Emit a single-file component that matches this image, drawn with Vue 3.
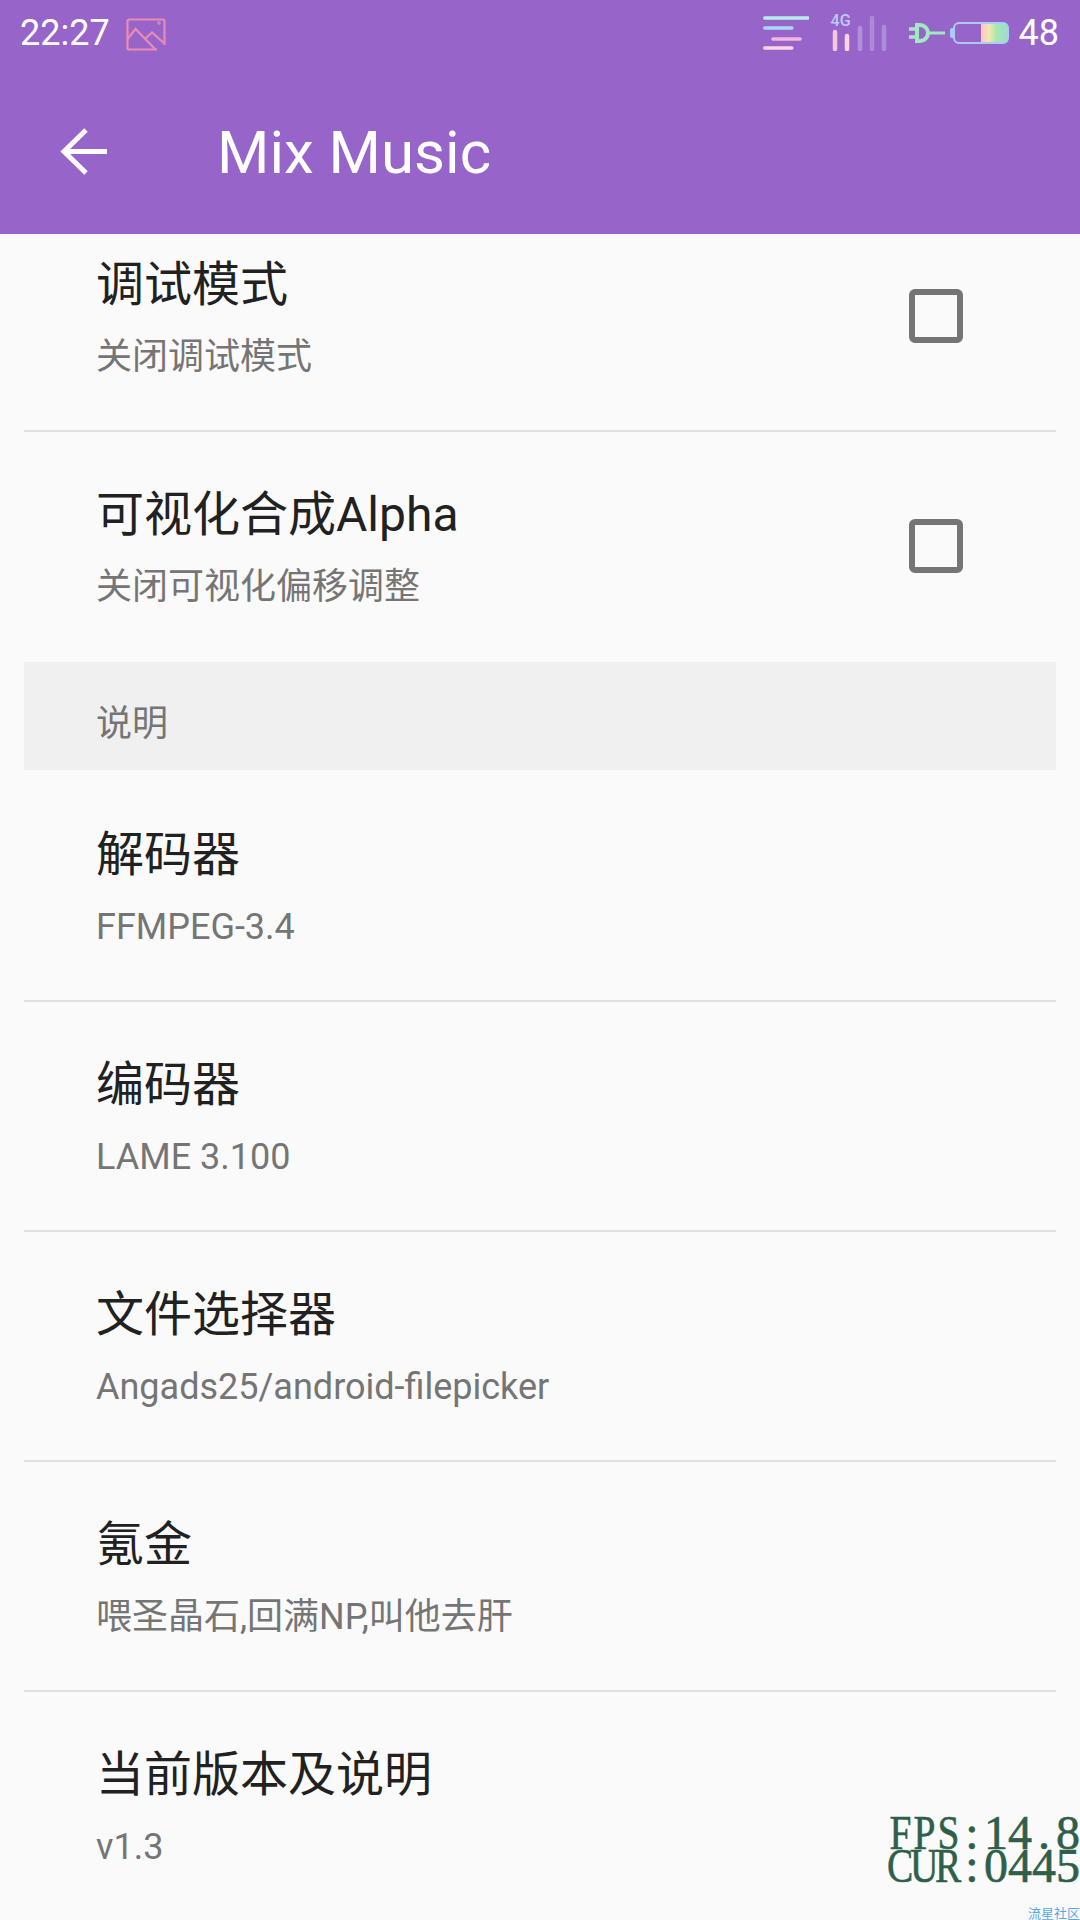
<template>
  <div class="page">
    <!-- Шапка -->
    <header class="header">
      <div class="status-bar">
        <div class="status-left">
          <span class="clock">22:27</span>
          <svg class="pic-icon" width="40" height="33" viewBox="0 0 40 33" fill="none" stroke="#e98bb4" stroke-width="2.200">
            <path d="M38.500 27V3a1.500 1.500 0 0 0-1.500-1.500H3A1.500 1.500 0 0 0 1.500 3v27A1.500 1.500 0 0 0 3 31.500h28" />
            <path d="M1.500 21L9.500 11l20 20.500" />
            <path d="M19 21l7-6.500 12.500 11" />
            <circle cx="33" cy="5" r="0.6" />
          </svg>
        </div>
        <div class="status-right">
          <svg width="46" height="34" viewBox="0 0 46 34" stroke-width="3.600" stroke-linecap="round">
            <path d="M1.800 2h43" stroke="#b9ecec" />
            <path d="M1.800 12h27" stroke="#a9d9f6" />
            <path d="M10 23h27" stroke="#f3b6dc" />
            <path d="M1.800 32h27" stroke="#fbd6e4" />
          </svg>
          <svg width="56" height="36" viewBox="0 0 56 36" stroke-width="4.500" stroke-linecap="round">
            <path d="M4 17v17" stroke="#f5c6e0" />
            <path d="M16 21v13" stroke="#f9d6e2" />
            <path d="M29 13v21" stroke="#b18fdd" />
            <path d="M41 3v31" stroke="#ab88d8" />
            <path d="M53 12v22" stroke="#ab8ed8" />
          </svg>
          <span class="net">4G</span>
          <svg class="plug" width="36" height="20" viewBox="0 0 36 20" fill="none" stroke="#a2e8c2">
            <path d="M0 6h7M0 14h7" stroke-width="3.500" />
            <path d="M8 2h3a8 8 0 0 1 0 16H8z" stroke-width="4" />
            <path d="M19 10h17" stroke-width="3" />
          </svg>
          <div class="battery">
            <div class="battery-level"></div>
          </div>
          <span class="level">48</span>
        </div>
      </div>
      <div class="toolbar">
        <svg class="back" width="48" height="48" viewBox="0 0 48 48" fill="none" stroke="#fff" stroke-width="5">
          <path d="M47 23.500H4" />
          <path d="M26 2L4 23.500 26 45" />
        </svg>
        <span class="title">Mix Music</span>
      </div>
    </header>

    <!-- Список настроек -->
    <main class="content">
      <div class="list">
        <template v-for="item in items" :key="item.title">
          <div v-if="item.section" class="section">{{ item.title }}</div>
          <div v-else class="row" :class="{ 'no-line': item.noLine }">
            <div class="row-text">
              <div class="row-title">{{ item.title }}</div>
              <div class="row-sub">{{ item.sub }}</div>
            </div>
            <span v-if="item.check" class="checkbox"></span>
          </div>
        </template>
      </div>
    </main>

    <!-- Счётчик поверх экрана -->
    <div class="fps">
      <div v-for="line in fpsLines" :key="line" class="fps-line">
        <span v-for="(ch, i) in line" :key="i" class="cell"><i :class="{ narrow: /[A-Z]/.test(ch) }">{{ ch }}</i></span>
      </div>
    </div>
    <div class="watermark">流星社区</div>
  </div>
</template>

<script setup>
const items = [
  { title: '调试模式', sub: '关闭调试模式', check: true },
  { title: '可视化合成Alpha', sub: '关闭可视化偏移调整', check: true, noLine: true },
  { title: '说明', section: true },
  { title: '解码器', sub: 'FFMPEG-3.4' },
  { title: '编码器', sub: 'LAME 3.100' },
  { title: '文件选择器', sub: 'Angads25/android-filepicker' },
  { title: '氪金', sub: '喂圣晶石,回满NP,叫他去肝' },
  { title: '当前版本及说明', sub: 'v1.3', noLine: true }
]

const fpsLines = ['FPS:14.8', 'CUR:0445']
</script>

<style scoped>
.page {
  position: relative;
  width: 1080px;
  height: 1920px;
  overflow: hidden;
  display: flex;
  flex-direction: column;
  background: #fafafa;
  font-family: Roboto, "Noto Sans CJK SC", sans-serif;
}

.header {
  position: relative;
  z-index: 1;
  height: 234px;
  flex-shrink: 0;
  background: #9765c9;
  color: #fff;
}

.status-bar {
  height: 66px;
  display: flex;
  align-items: center;
  justify-content: space-between;
  padding: 0 21px 0 20px;
}

.status-left {
  display: flex;
  align-items: center;
  gap: 16px;
}

.clock {
  font-size: 36px;
}

.pic-icon {
  margin-top: 2px;
}

.status-right {
  position: relative;
  display: flex;
  align-items: center;
  gap: 22px;
}

.net {
  position: absolute;
  left: 68px;
  top: -1px;
  font-size: 16px;
  font-weight: 500;
  color: #b9cdf6;
}

.plug {
  margin-right: -14px;
}

.battery {
  position: relative;
  width: 56px;
  height: 22px;
  display: flex;
  justify-content: flex-end;
  box-sizing: border-box;
  border: 2px solid #a9cdf6;
  border-radius: 6px;
}

.battery::before {
  content: "";
  position: absolute;
  left: -5px;
  top: 4px;
  width: 3px;
  height: 10px;
  border-radius: 2px 0 0 2px;
  background: #a9cdf6;
}

.battery-level {
  width: 26px;
  background: linear-gradient(90deg, #f8c6c8, #f7e6ae 30%, #a6e8ae 58%, #9fdcd0);
}

.level {
  font-size: 36px;
  margin-left: -12px;
}

.toolbar {
  height: 168px;
  box-sizing: border-box;
  padding-top: 3px;
  display: flex;
  align-items: center;
}

.back {
  margin-left: 60px;
}

.title {
  margin-left: 109px;
  margin-top: 2px;
  font-size: 60px;
}

.content {
  flex: 1;
  overflow: hidden;
}

.list {
  margin: -32px 24px 0;
}

.row {
  height: 230px;
  box-sizing: border-box;
  display: flex;
  align-items: center;
  justify-content: space-between;
  padding: 0 93px 0 72px;
  border-bottom: 2px solid #e0e0e0;
}

.no-line {
  border-bottom-color: transparent;
}

.row-text {
  padding-top: 2px;
}

.row-title {
  font-size: 48px;
  line-height: 64px;
  color: #212121;
}

.row-sub {
  margin-top: 15px;
  font-size: 36px;
  line-height: 50px;
  color: #757575;
}

.checkbox {
  width: 54px;
  height: 54px;
  box-sizing: border-box;
  border: 6px solid #757575;
  border-radius: 6px;
}

.section {
  height: 108px;
  margin-bottom: 2px;
  box-sizing: border-box;
  padding: 37px 0 0 72px;
  font-size: 36px;
  line-height: 50px;
  color: #757575;
  background: #f0f0f0;
}

.fps {
  position: absolute;
  right: 0;
  top: 1816px;
  color: #2f5f4a;
  font-family: "Liberation Serif", serif;
  font-size: 48px;
  line-height: 33px;
  -webkit-text-stroke: 0.6px #2f5f4a;
}

.fps-line {
  display: flex;
  height: 33px;
}

.cell {
  width: 24px;
  text-align: center;
}

.cell i {
  display: inline-block;
  font-style: normal;
}

.cell i.narrow {
  transform: scaleX(0.82);
  margin: 0 -6px;
}

.watermark {
  position: absolute;
  right: 0;
  top: 1906px;
  font-size: 13px;
  line-height: 16px;
  color: #5aa8e0;
}
</style>
